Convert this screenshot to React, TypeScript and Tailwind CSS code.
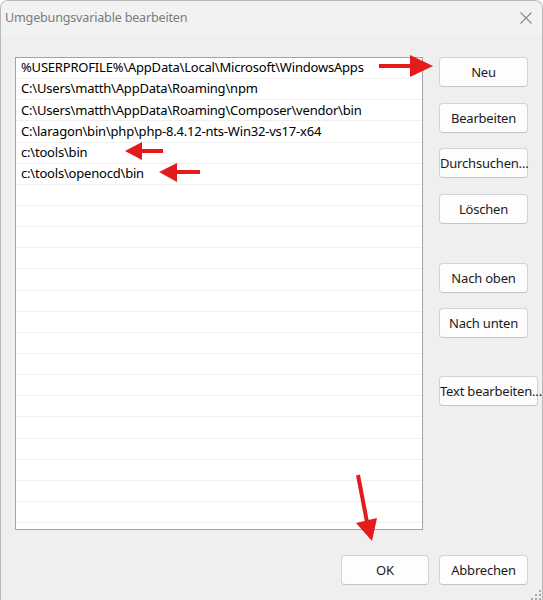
import React from "react";

const rows = [
  "%USERPROFILE%\\AppData\\Local\\Microsoft\\WindowsApps",
  "C:\\Users\\matth\\AppData\\Roaming\\npm",
  "C:\\Users\\matth\\AppData\\Roaming\\Composer\\vendor\\bin",
  "C:\\laragon\\bin\\php\\php-8.4.12-nts-Win32-vs17-x64",
  "c:\\tools\\bin",
  "c:\\tools\\openocd\\bin",
];

const emptyRows = Array.from({ length: 17 }, (_, i) => i);

function Btn({ label, className = "" }: { label: string; className?: string }) {
  return (
    <button
      className={
        "h-[30px] shrink-0 px-0 whitespace-nowrap rounded-[4px] border border-[#d3d3d3] border-b-[#c4c4c4] bg-[#fdfdfd] text-[13px] tracking-[-0.2px] text-[#1a1a1a] leading-none " +
        className
      }
    >
      {label}
    </button>
  );
}

export default function App() {
  return (
    <div
      className="relative w-[543px] h-[600px] overflow-hidden rounded-t-[8px] border-t border-l border-r border-[#b9b9b9] bg-[#efefef] flex flex-col"
      style={{ fontFamily: '"Noto Sans", "Open Sans", sans-serif' }}
    >
      {/* title bar */}
      <div className="h-[34px] shrink-0 flex items-center justify-between bg-[#f2f2f2] pl-[4px] pr-[10px]">
        <span className="text-[12.6px] tracking-[-0.2px] text-[#7b7b7b]">Umgebungsvariable bearbeiten</span>
        <svg width="12" height="12" viewBox="0 0 12 12" className="mt-[-1px]">
          <path d="M0.5 0.5 L11.5 11.5 M11.5 0.5 L0.5 11.5" stroke="#8a8a8a" strokeWidth="1.1" />
        </svg>
      </div>

      {/* body */}
      <div className="flex pl-[14px] pt-[22px] gap-[16px]">
        <div className="w-[408px] h-[473px] shrink-0 border border-[#a4a4a4] bg-white overflow-hidden">
          {rows.map((r) => (
            <div
              key={r}
              className="h-[21.15px] border-b border-[#f0f0f0] pl-[5px] flex items-center text-[13px] tracking-[-0.2px] text-black whitespace-nowrap"
            >
              {r}
            </div>
          ))}
          {emptyRows.map((i) => (
            <div key={i} className="h-[21.15px] border-b border-[#f0f0f0]" />
          ))}
        </div>
        <div className="flex flex-col">
          <Btn label="Neu" className="w-[89px]" />
          <Btn label="Bearbeiten" className="w-[89px] mt-[16px]" />
          <Btn label="Durchsuchen..." className="w-[89px] mt-[15px]" />
          <Btn label="Löschen" className="w-[89px] mt-[16px]" />
          <Btn label="Nach oben" className="w-[89px] mt-[39px]" />
          <Btn label="Nach unten" className="w-[89px] mt-[15px]" />
          <Btn label="Text bearbeiten..." className="w-[99px] mt-[38px]" />
        </div>
      </div>

      {/* footer */}
      <div className="flex justify-end gap-[10px] pr-[14px] pt-[25px]">
        <Btn label="OK" className="w-[88px]" />
        <Btn label="Abbrechen" className="w-[89px]" />
      </div>

      {/* annotations */}
      <svg
        className="absolute left-[-1px] top-[-1px] pointer-events-none"
        width="543"
        height="600"
        viewBox="0 0 543 600"
      >
        <g fill="#e31b1b" stroke="#e31b1b">
          <line x1="379" y1="66" x2="412" y2="66" strokeWidth="4" />
          <polygon points="410,55 433,66 410,77" stroke="none" />
          <line x1="140" y1="151" x2="163" y2="151" strokeWidth="4" />
          <polygon points="142,142 125,151 142,160" stroke="none" />
          <line x1="175" y1="172" x2="200" y2="172" strokeWidth="4" />
          <polygon points="177,163 159,172 177,182" stroke="none" />
          <line x1="358" y1="475" x2="367" y2="522" strokeWidth="4" />
          <polygon points="356,523 377,518 372,541" stroke="none" />
        </g>
        <g fill="#a8a8a8">
          <rect x="539" y="590" width="2" height="2" />
          <rect x="539" y="594" width="2" height="2" />
          <rect x="535" y="594" width="2" height="2" />
          <rect x="539" y="598" width="2" height="2" />
          <rect x="535" y="598" width="2" height="2" />
          <rect x="531" y="598" width="2" height="2" />
        </g>
      </svg>
    </div>
  );
}
